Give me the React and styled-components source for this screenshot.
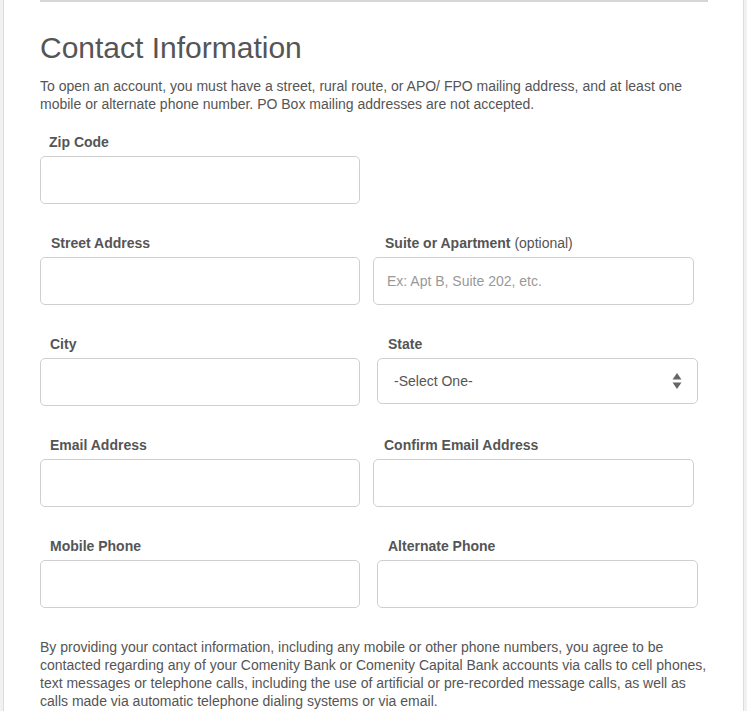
import React from 'react';
import styled, { createGlobalStyle } from 'styled-components';

const GlobalStyle = createGlobalStyle`
  html, body {
    margin: 0;
    padding: 0;
    background: #f1f1f1;
  }
  body {
    font-family: "Liberation Sans", Arial, sans-serif;
    color: #555;
  }
`;

const Page = styled.div`
  padding: 0 3px;
  background: #f1f1f1;
`;

const Panel = styled.div`
  background: #fff;
  border-left: 1px solid #dcdcdc;
  border-right: 1px solid #dcdcdc;
  padding: 0 35px 12px 36px;
`;

const Divider = styled.div`
  width: 668px;
  height: 2px;
  background: #d6d6d6;
`;

const Title = styled.h2`
  margin: 29px 0 13px;
  font-size: 30px;
  line-height: 33px;
  font-weight: normal;
  color: #555;
`;

const Text = styled.p`
  margin: ${(p) => p.$margin || '0'};
  font-size: 14px;
  line-height: 18.3px;
  color: #555;
`;

const Grid = styled.div`
  display: grid;
  grid-template-columns: 320px 1fr;
  column-gap: 13px;
  row-gap: 29px;
  margin-top: 18px;
`;

const Field = styled.div`
  display: flex;
  flex-direction: column;
  gap: 4px;
  padding-left: ${(p) => p.$shift || 0}px;
`;

const Label = styled.label`
  font-size: 14px;
  line-height: 20px;
  font-weight: bold;
  color: #555;
  padding-left: ${(p) => p.$indent || 10}px;
`;

const Optional = styled.span`
  font-weight: normal;
`;

const Input = styled.input`
  box-sizing: border-box;
  width: ${(p) => p.$w || 320}px;
  height: 48px;
  border: 1px solid #cfcfcf;
  border-radius: 5px;
  padding: 0 13px;
  font-family: "Liberation Sans", Arial, sans-serif;
  font-size: 14px;
  color: #555;
  outline: none;
  background: #fff;

  &::placeholder {
    color: #999;
  }
`;

const SelectBox = styled.div`
  box-sizing: border-box;
  width: 321px;
  height: 46px;
  border: 1px solid #cfcfcf;
  border-radius: 5px;
  padding: 0 15px 0 16px;
  display: flex;
  align-items: center;
  justify-content: space-between;
  font-size: 14px;
  color: #555;
`;

const Arrows = () => (
  <svg width="10" height="18" viewBox="0 0 10 18">
    <polygon points="5,1 9.5,7.5 0.5,7.5" fill="#666" />
    <polygon points="0.5,10.5 9.5,10.5 5,17" fill="#666" />
  </svg>
);

function App() {
  return (
    <Page>
      <GlobalStyle />
      <Panel>
        <Divider />
        <Title>Contact Information</Title>
        <Text>
          To open an account, you must have a street, rural route, or APO/ FPO mailing address, and at least one
          mobile or alternate phone number. PO Box mailing addresses are not accepted.
        </Text>

        <Grid>
          <Field>
            <Label $indent={9}>Zip Code</Label>
            <Input />
          </Field>
          <div />

          <Field>
            <Label $indent={11}>Street Address</Label>
            <Input />
          </Field>
          <Field>
            <Label $indent={12}>
              Suite or Apartment <Optional>(optional)</Optional>
            </Label>
            <Input $w={321} placeholder="Ex: Apt B, Suite 202, etc." />
          </Field>

          <Field>
            <Label>City</Label>
            <Input />
          </Field>
          <Field $shift={4}>
            <Label $indent={11}>State</Label>
            <SelectBox>
              -Select One-
              <Arrows />
            </SelectBox>
          </Field>

          <Field>
            <Label>Email Address</Label>
            <Input />
          </Field>
          <Field>
            <Label $indent={11}>Confirm Email Address</Label>
            <Input $w={321} />
          </Field>

          <Field>
            <Label>Mobile Phone</Label>
            <Input />
          </Field>
          <Field $shift={4}>
            <Label $indent={11}>Alternate Phone</Label>
            <Input $w={321} />
          </Field>
        </Grid>

        <Text $margin="30px 0 0">
          By providing your contact information, including any mobile or other phone numbers, you agree to be
          contacted regarding any of your Comenity Bank or Comenity Capital Bank accounts via calls to cell phones,
          text messages or telephone calls, including the use of artificial or pre-recorded message calls, as well as
          calls made via automatic telephone dialing systems or via email.
        </Text>
      </Panel>
    </Page>
  );
}

export default App;
